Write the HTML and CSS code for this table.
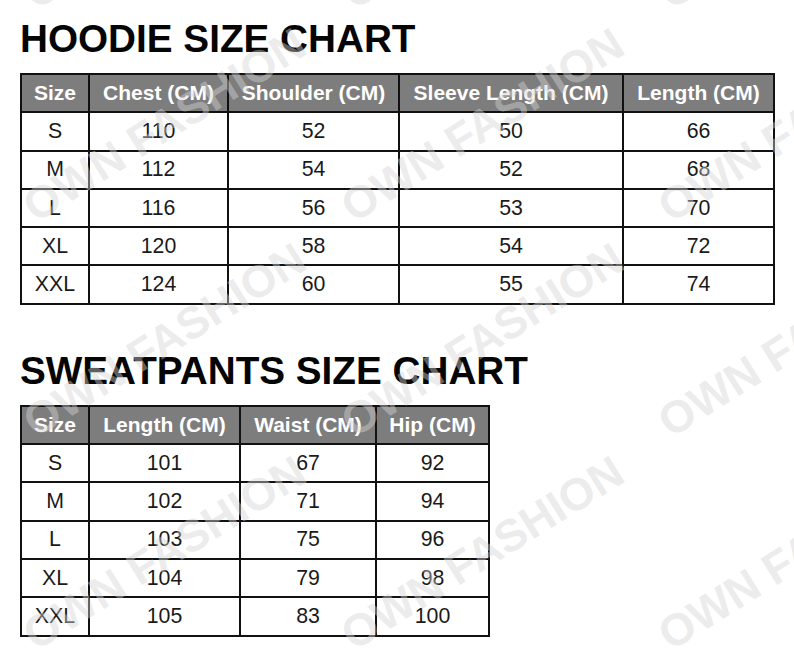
FILE: index.html
```html
<!DOCTYPE html>
<html lang="en">
<head>
<meta charset="utf-8">
<title>Size Chart</title>
<link rel="stylesheet" href="styles.css">
</head>
<body>
<main class="page">
  <section class="chart">
    <h1 class="chart-title">HOODIE SIZE CHART</h1>
    <table class="size-table hoodie">
      <colgroup>
        <col class="c1"><col class="c2"><col class="c3"><col class="c4"><col class="c5">
      </colgroup>
      <thead>
        <tr><th>Size</th><th>Chest (CM)</th><th>Shoulder (CM)</th><th>Sleeve Length (CM)</th><th>Length (CM)</th></tr>
      </thead>
      <tbody>
        <tr><td>S</td><td>110</td><td>52</td><td>50</td><td>66</td></tr>
        <tr><td>M</td><td>112</td><td>54</td><td>52</td><td>68</td></tr>
        <tr><td>L</td><td>116</td><td>56</td><td>53</td><td>70</td></tr>
        <tr><td>XL</td><td>120</td><td>58</td><td>54</td><td>72</td></tr>
        <tr><td>XXL</td><td>124</td><td>60</td><td>55</td><td>74</td></tr>
      </tbody>
    </table>
  </section>
  <section class="chart second">
    <h1 class="chart-title">SWEATPANTS SIZE CHART</h1>
    <table class="size-table pants">
      <colgroup>
        <col class="c1"><col class="c2"><col class="c3"><col class="c4">
      </colgroup>
      <thead>
        <tr><th>Size</th><th>Length (CM)</th><th>Waist (CM)</th><th>Hip (CM)</th></tr>
      </thead>
      <tbody>
        <tr><td>S</td><td>101</td><td>67</td><td>92</td></tr>
        <tr><td>M</td><td>102</td><td>71</td><td>94</td></tr>
        <tr><td>L</td><td>103</td><td>75</td><td>96</td></tr>
        <tr><td>XL</td><td>104</td><td>79</td><td>98</td></tr>
        <tr><td>XXL</td><td>105</td><td>83</td><td>100</td></tr>
      </tbody>
    </table>
  </section>
</main>
<div class="watermarks" aria-hidden="true">
  <span class="wm" style="left:41px;top:-31px">OWN FASHION</span>
  <span class="wm" style="left:359px;top:-31px">OWN FASHION</span>
  <span class="wm" style="left:676px;top:-31px">OWN FASHION</span>
  <span class="wm" style="left:41px;top:182px">OWN FASHION</span>
  <span class="wm" style="left:359px;top:182px">OWN FASHION</span>
  <span class="wm" style="left:676px;top:182px">OWN FASHION</span>
  <span class="wm" style="left:41px;top:397px">OWN FASHION</span>
  <span class="wm" style="left:359px;top:397px">OWN FASHION</span>
  <span class="wm" style="left:676px;top:397px">OWN FASHION</span>
  <span class="wm" style="left:41px;top:610px">OWN FASHION</span>
  <span class="wm" style="left:359px;top:610px">OWN FASHION</span>
  <span class="wm" style="left:676px;top:610px">OWN FASHION</span>
</div>
</body>
</html>
```

FILE: styles.css
```css
html, body {
  margin: 0;
  padding: 0;
  background: #ffffff;
}

body {
  width: 794px;
  height: 656px;
  overflow: hidden;
  position: relative;
  font-family: "Liberation Sans", Arial, sans-serif;
  color: #111111;
}

.page {
  padding: 17px 0 0 20px;
  display: flex;
  flex-direction: column;
}

.chart {
  display: flex;
  flex-direction: column;
  align-items: flex-start;
}

.chart.second {
  margin-top: 44px;
}

.chart-title {
  margin: 0 0 12px 0;
  font-size: 38.7px;
  line-height: 44px;
  font-weight: 700;
  color: #050505;
  letter-spacing: 0;
}

.size-table {
  border-collapse: collapse;
  table-layout: fixed;
  border: 2px solid #111;
}

.size-table th,
.size-table td {
  border: 2px solid #111;
  padding: 0;
  text-align: center;
  vertical-align: middle;
  white-space: nowrap;
}

.size-table tr {
  height: 38.3px;
}

.size-table th {
  background: #7d7d7d;
  color: #ffffff;
  font-weight: 700;
  font-size: 21px;
}

.size-table td {
  font-size: 21.3px;
  font-weight: 400;
  color: #1a1a1a;
}

.hoodie { width: 755px; }
.hoodie .c1 { width: 68px; }
.hoodie .c2 { width: 139px; }
.hoodie .c3 { width: 171px; }
.hoodie .c4 { width: 224px; }
.hoodie .c5 { width: 151px; }

.pants { width: 470px; }
.pants .c1 { width: 68px; }
.pants .c2 { width: 151px; }
.pants .c3 { width: 136px; }
.pants .c4 { width: 113px; }

.watermarks {
  position: absolute;
  inset: 0;
  pointer-events: none;
  overflow: hidden;
}

.wm {
  position: absolute;
  display: block;
  height: 50px;
  line-height: 50px;
  font-family: "Liberation Sans", Arial, sans-serif;
  font-weight: 700;
  font-size: 45px;
  white-space: nowrap;
  color: rgba(212, 212, 212, 0.45);
  transform-origin: 0 100%;
  transform: rotate(-32deg);
}
```
